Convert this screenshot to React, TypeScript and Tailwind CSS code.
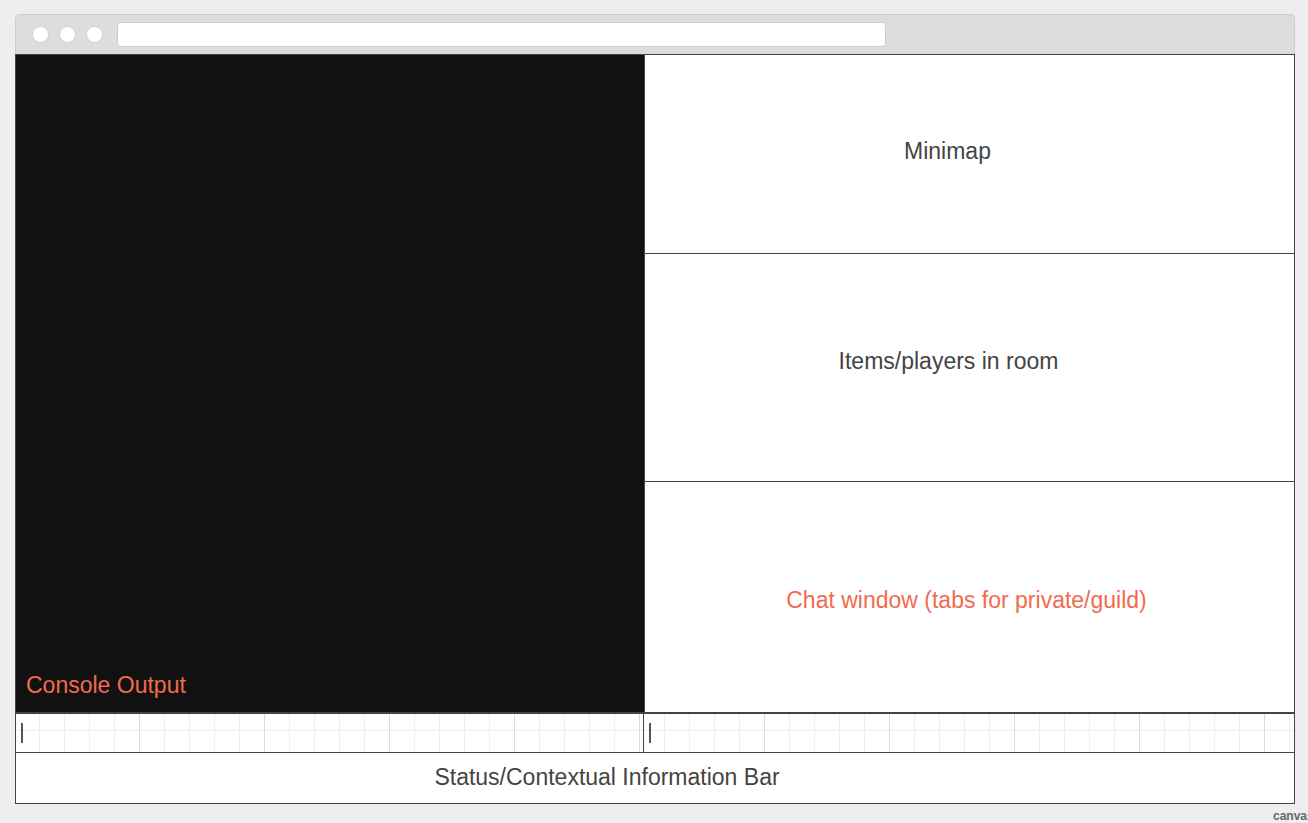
import React from "react";

const gridLeft =
  "bg-[linear-gradient(to_right,#dcdcdc_1px,transparent_1px),linear-gradient(to_right,#eeeeee_1px,transparent_1px),linear-gradient(to_bottom,#eeeeee_1px,transparent_1px)] bg-[size:125px_100%,25px_25px,25px_25px] bg-[position:123px_0,23px_16px,23px_16px]";
const gridRight =
  "bg-[linear-gradient(to_right,#dcdcdc_1px,transparent_1px),linear-gradient(to_right,#eeeeee_1px,transparent_1px),linear-gradient(to_bottom,#eeeeee_1px,transparent_1px)] bg-[size:125px_100%,25px_25px,25px_25px] bg-[position:120px_0,20px_16px,20px_16px]";

function InputCell({ grid, cursorPad }: { grid: string; cursorPad: string }) {
  return (
    <div className={`flex-1 h-full bg-white ${grid} flex items-center ${cursorPad}`}>
      <div className="w-[2px] h-[20px] bg-[#555555]" />
    </div>
  );
}

export default function App() {
  return (
    <div
      className="relative w-[1308px] h-[823px] overflow-hidden bg-[#eeeeee] pt-[14px] pl-[15px]"
      style={{ fontFamily: '"Liberation Sans", Arial, sans-serif' }}
    >
      <div className="w-[1280px] flex flex-col">
        {/* title bar */}
        <div className="h-[40px] bg-[#dddddd] border border-b-0 border-[#cccccc] rounded-t-[5px] flex items-center pl-[16px]">
          <div className="flex gap-[10px]">
            <div className="w-[17px] h-[17px] rounded-full bg-white border border-[#d0d0d0]" />
            <div className="w-[17px] h-[17px] rounded-full bg-white border border-[#d0d0d0]" />
            <div className="w-[17px] h-[17px] rounded-full bg-white border border-[#d0d0d0]" />
          </div>
          <div className="ml-[14px] w-[769px] h-[25px] bg-white border border-[#cccccc] rounded-[4px]" />
        </div>

        {/* content */}
        <div className="h-[750px] border border-[#444444] flex flex-col bg-white">
          <div className="h-[657px] flex">
            <div className="w-[628px] bg-[#111111] flex flex-col justify-end pl-[10px] pb-[14px]">
              <span className="text-[23px] leading-[26px] text-[#f26a4e]">Console Output</span>
            </div>
            <div className="flex-1 border-l border-[#444444] flex flex-col">
              <div className="h-[198px] flex items-center justify-center pr-[44px] pb-[6px]">
                <span className="text-[23px] text-[#444444]">Minimap</span>
              </div>
              <div className="h-[228px] border-t border-[#444444] flex items-center justify-center pr-[42px] pb-[12px]">
                <span className="text-[23px] text-[#444444]">Items/players in room</span>
              </div>
              <div className="flex-1 border-t border-[#444444] flex items-center justify-center pr-[6px] pt-[7px]">
                <span className="text-[23px] text-[#f26a4e]">Chat window (tabs for private/guild)</span>
              </div>
            </div>
          </div>

          <div className="h-[41px] border-t-2 border-b border-[#444444] flex">
            <div className="w-[628px] h-full border-r border-[#444444] flex">
              <InputCell grid={gridLeft} cursorPad="pl-[5px]" />
            </div>
            <div className="flex-1 h-full flex">
              <InputCell grid={gridRight} cursorPad="pl-[5px]" />
            </div>
          </div>

          <div className="flex-1 flex items-center justify-center pr-[96px] pb-[2px]">
            <span className="text-[23px] text-[#444444]">Status/Contextual Information Bar</span>
          </div>
        </div>
      </div>

      <div className="absolute left-[1273px] top-[807px] text-[12px] font-bold text-[#666666] whitespace-nowrap">
        canvas
      </div>
    </div>
  );
}
